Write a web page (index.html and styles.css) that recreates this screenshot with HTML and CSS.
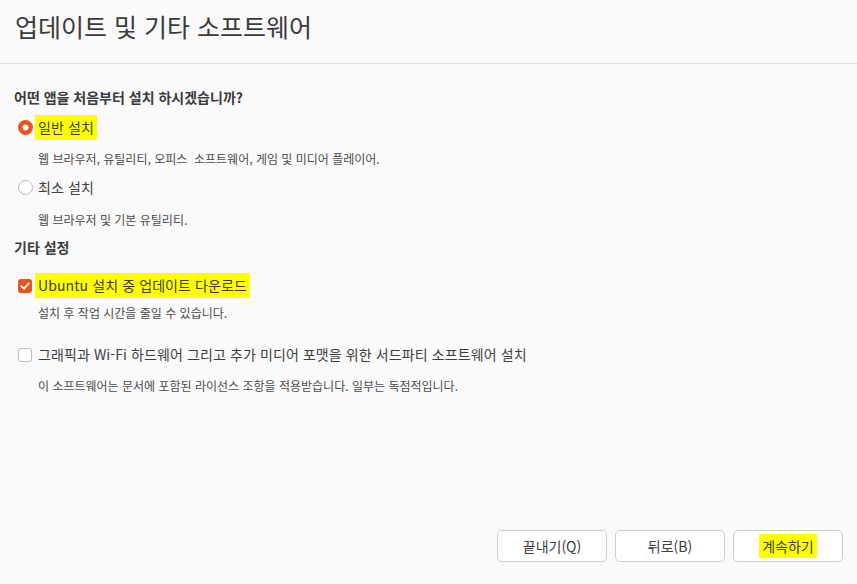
FILE: index.html
```html
<!DOCTYPE html>
<html lang="ko">
<head>
<meta charset="utf-8">
<link rel="stylesheet" href="styles.css">
</head>
<body>
<div class="window">
  <header class="header">
    <h1 class="title">업데이트 및 기타 소프트웨어</h1>
  </header>
  <main class="content">
    <div class="question">어떤 앱을 처음부터 설치 하시겠습니까?</div>

    <div class="option row-normal">
      <span class="radio checked"></span>
      <span class="label mark">일반 설치</span>
    </div>
    <div class="desc desc-normal">웹 브라우저, 유틸리티, 오피스&nbsp; 소프트웨어, 게임 및 미디어 플레이어.</div>

    <div class="option row-min">
      <span class="radio"></span>
      <span class="label">최소 설치</span>
    </div>
    <div class="desc desc-min">웹 브라우저 및 기본 유틸리티.</div>

    <div class="question heading-other">기타 설정</div>

    <div class="option row-update">
      <span class="check checked">
        <svg viewBox="0 0 14 14" width="14" height="14"><path d="M3.3 7.2 L5.9 9.7 L10.8 4.4" fill="none" stroke="#fff" stroke-width="1.8" stroke-linecap="round" stroke-linejoin="round"/></svg>
      </span>
      <span class="label mark">Ubuntu 설치 중 업데이트 다운로드</span>
    </div>
    <div class="desc desc-update">설치 후 작업 시간을 줄일 수 있습니다.</div>

    <div class="option row-third">
      <span class="check"></span>
      <span class="label">그래픽과 Wi-Fi 하드웨어 그리고 추가 미디어 포맷을 위한 서드파티 소프트웨어 설치</span>
    </div>
    <div class="desc desc-third">이 소프트웨어는 문서에 포함된 라이선스 조항을 적용받습니다. 일부는 독점적입니다.</div>
  </main>
  <footer class="footer">
    <button class="btn">끝내기(Q)</button>
    <button class="btn">뒤로(B)</button>
    <button class="btn"><span class="mark btn-mark">계속하기</span></button>
  </footer>
</div>
</body>
</html>
```
FILE: styles.css
```css
* { box-sizing: border-box; }
html, body {
  margin: 0;
  padding: 0;
  background: #fafafa;
}
body {
  font-family: "Noto Sans CJK KR", "Noto Sans", sans-serif;
  color: #3d3d3d;
}
.window {
  width: 857px;
  height: 584px;
  display: flex;
  flex-direction: column;
}
.header {
  height: 64px;
  border-bottom: 1px solid #dedede;
  flex: none;
}
.title {
  margin: 0;
  padding: 10px 0 0 15px;
  font-size: 25px;
  font-weight: 400;
  line-height: 32px;
  color: #3a3a3a;
}
.content {
  flex: 1;
  padding: 0 14px;
  display: flex;
  flex-direction: column;
  align-items: flex-start;
}
.question {
  font-size: 14px;
  font-weight: 700;
  line-height: 20px;
  margin-top: 23px;
  color: #3a3a3a;
}
.heading-other { margin-top: 8px; }
.option {
  display: flex;
  align-items: center;
  height: 25px;
  padding-left: 4px;
}
.row-normal { margin-top: 8px; }
.row-min { margin-top: 7px; }
.row-update { margin-top: 16px; }
.row-third { margin-top: 20px; }
.label {
  font-size: 14px;
  line-height: 25px;
  margin-left: 3px;
  padding: 0 3px;
  letter-spacing: 0.1px;
}
.mark {
  background: #ffff00;
}
.radio {
  width: 15px;
  height: 15px;
  border-radius: 50%;
  border: 1px solid #b9b9b9;
  background: #fff;
  flex: none;
  margin-right: -1px;
}
.radio.checked {
  border: none;
  background: radial-gradient(circle, #fff 0 2.7px, #e95420 3.3px);
}
.check {
  width: 14px;
  height: 14px;
  border-radius: 3px;
  border: 1px solid #b9b9b9;
  background: #fff;
  flex: none;
  display: flex;
}
.check.checked {
  border: none;
  background: #e95420;
}
.desc {
  font-size: 12px;
  line-height: 18px;
  padding-left: 24px;
  color: #4a4a4a;
}
.desc-normal { margin-top: 10px; }
.desc-min { margin-top: 11px; }
.desc-update { margin-top: 6px; }
.desc-third { margin-top: 10px; }
.footer {
  flex: none;
  display: flex;
  justify-content: flex-end;
  gap: 8px;
  padding: 0 14px 22px 0;
}
.btn {
  width: 110px;
  height: 32px;
  border: 1px solid #cdcdcd;
  border-radius: 5px;
  background: #fff;
  font-family: "Noto Sans CJK KR", "Noto Sans", sans-serif;
  font-size: 14px;
  color: #3d3d3d;
  padding: 0;
}
.btn-mark {
  padding: 2px 3px;
}
```
